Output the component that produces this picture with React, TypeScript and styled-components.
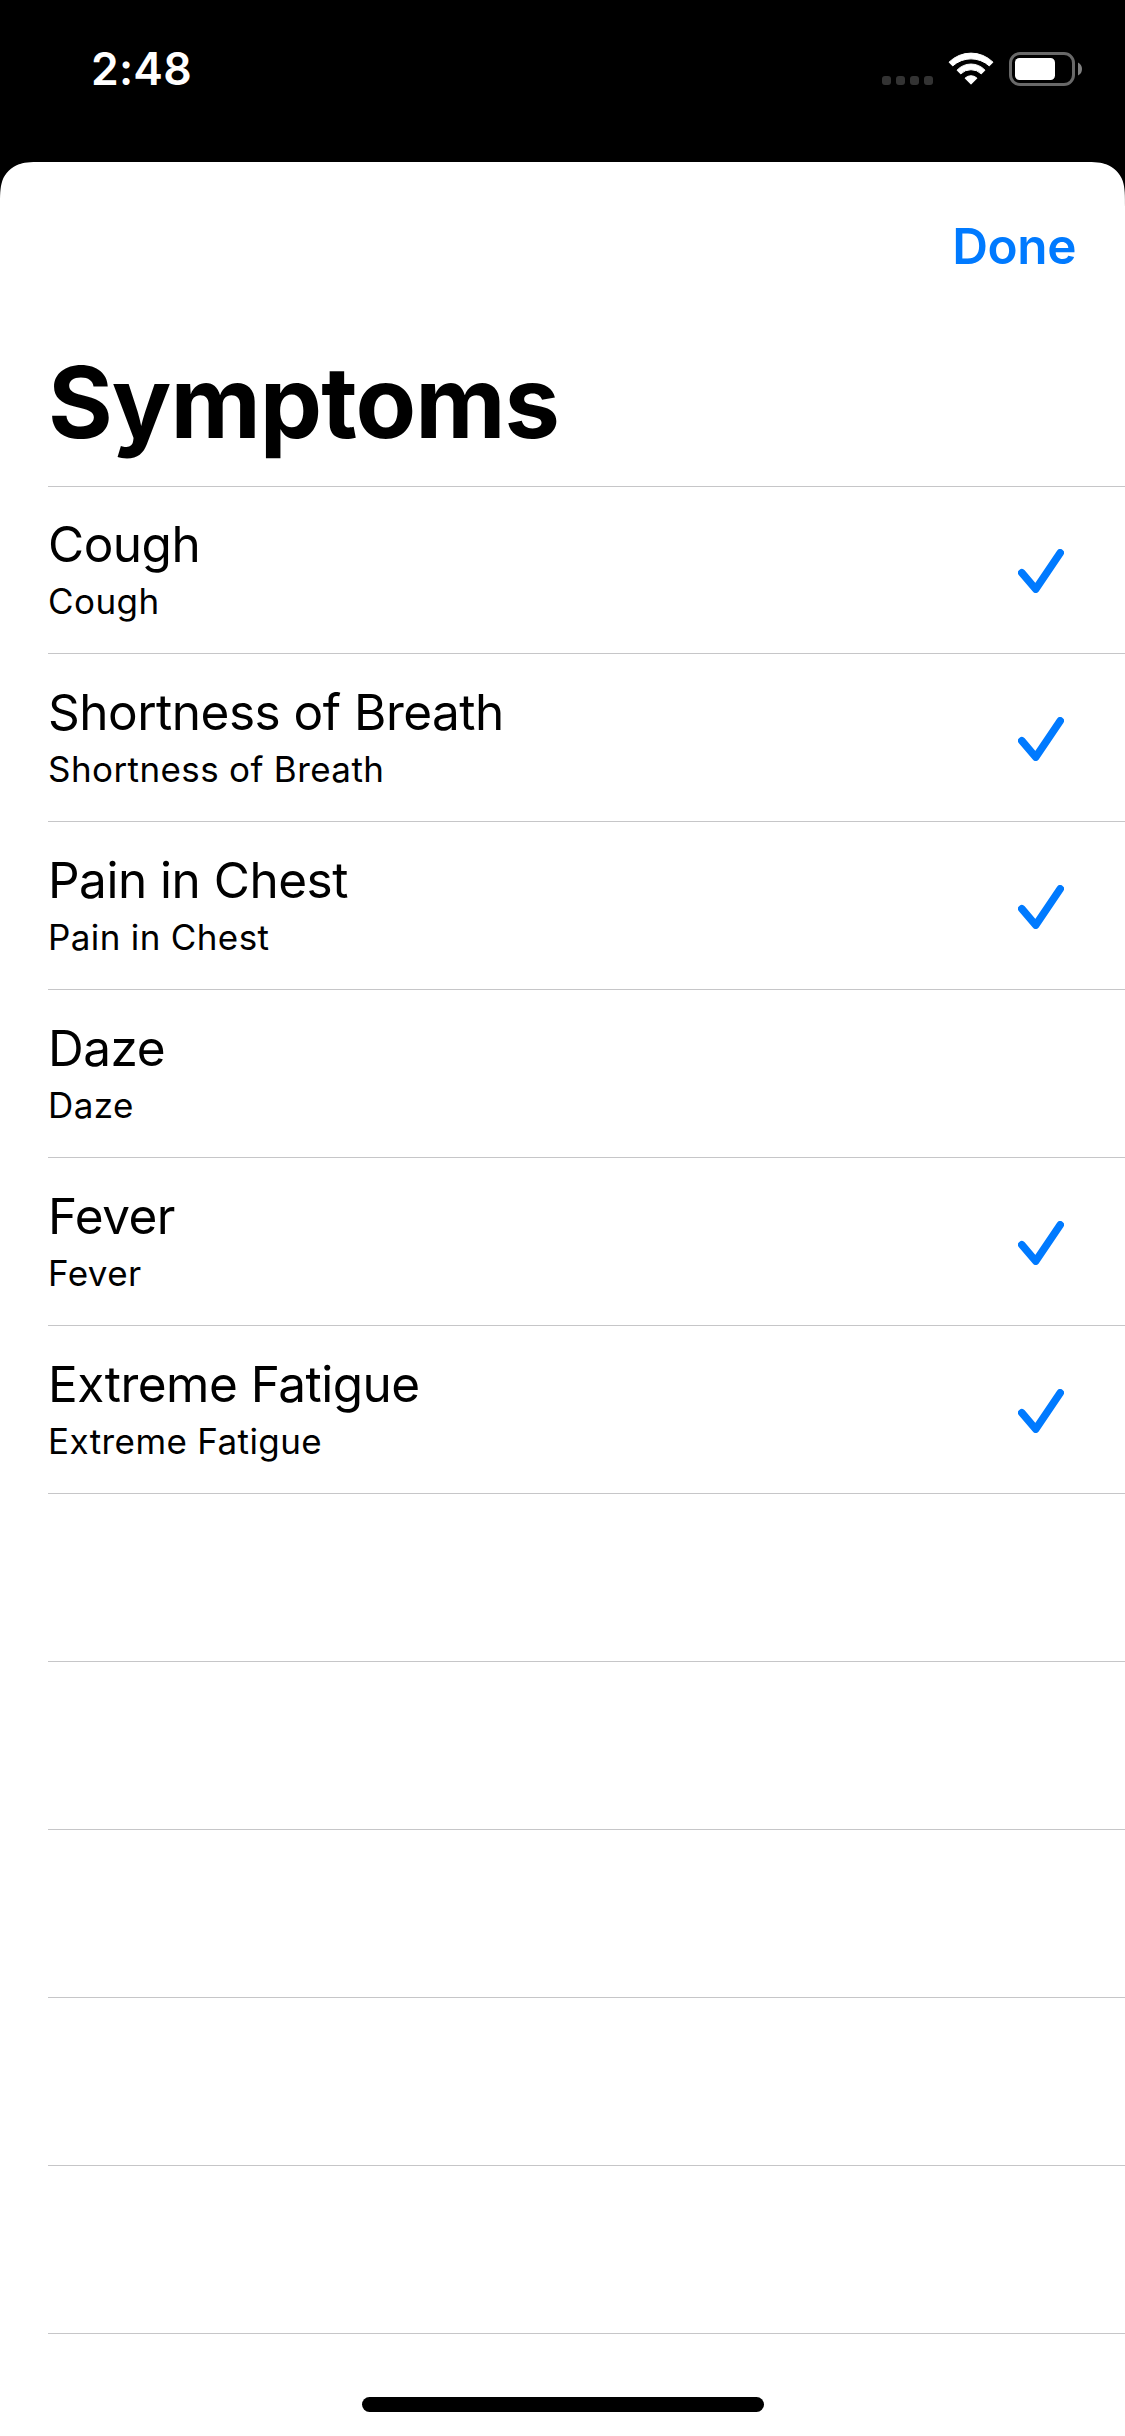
import React from 'react';
import styled, { createGlobalStyle } from 'styled-components';

const GlobalStyle = createGlobalStyle`
  body {
    margin: 0;
    background: #000;
  }
`;

const Screen = styled.div`
  width: 1125px;
  height: 2436px;
  display: flex;
  flex-direction: column;
  overflow: hidden;
  background: #000;
  color: #000;
  font-family: Inter, 'Liberation Sans', sans-serif;
`;

const StatusBar = styled.header`
  flex: none;
  box-sizing: border-box;
  height: 162px;
  padding: 42px 41px 0 91px;
  display: flex;
  justify-content: space-between;
  align-items: flex-start;
`;

const Clock = styled.time`
  color: #fff;
  font-size: 44.5px;
  font-weight: 560;
  line-height: 54px;
  letter-spacing: 0.2px;
`;

const StatusIcons = styled.div`
  display: flex;
  align-items: flex-end;
  margin-top: 10px;
  height: 34px;
`;

const SignalDots = styled.div`
  display: flex;
  gap: 5px;
  margin: 0 15px 1px 0;
`;

const Dot = styled.span`
  width: 9px;
  height: 9px;
  border-radius: 3px;
  background: #333;
`;

const WifiSvg = styled.svg`
  display: block;
  margin-right: 15px;
`;

const Sheet = styled.main`
  flex: 1;
  display: flex;
  flex-direction: column;
  background: #fff;
  clip-path: path('M45.86 0C32.65 0 26.05 0 20.1 1.96L18.94 2.25C11.18 5.07 5.07 11.18 2.25 18.94C0 26.05 0 32.65 0 45.86V2274H1125V45.86C1125 32.65 1125 26.05 1122.75 18.94C1119.93 11.18 1113.82 5.07 1106.06 2.25L1104.9 1.96C1098.95 0 1092.35 0 1079.14 0Z');
`;

const NavBar = styled.div`
  box-sizing: border-box;
  height: 180px;
  padding: 54px 49px 0;
  display: flex;
  justify-content: flex-end;
  align-items: flex-start;
`;

const DoneButton = styled.button`
  border: 0;
  padding: 0;
  background: none;
  color: #007aff;
  font-family: inherit;
  font-size: 49.5px;
  font-weight: 600;
  line-height: 60px;
  letter-spacing: -0.4px;
`;

const Heading = styled.h1`
  box-sizing: border-box;
  margin: 0;
  height: 144px;
  padding-left: 48px;
  font-size: 99px;
  font-weight: 700;
  line-height: 120px;
  letter-spacing: -1px;
`;

const List = styled.ul`
  flex: 1;
  list-style: none;
  margin: 0 0 0 48px;
  padding: 0;
  box-shadow: inset 0 1px #c6c6c8;
`;

const Row = styled.li`
  box-sizing: border-box;
  height: 168px;
  padding: 28px 61px 0 0;
  border-bottom: 1px solid #c6c6c8;
  display: flex;
  justify-content: space-between;
  align-items: flex-start;
`;

const Labels = styled.div`
  display: flex;
  flex-direction: column;
  gap: 6px;
  white-space: nowrap;
`;

const Title = styled.span`
  font-size: 49.5px;
  line-height: 60px;
  letter-spacing: -0.5px;
`;

const Subtitle = styled.span`
  font-size: 35px;
  line-height: 42px;
  letter-spacing: 0.42px;
  word-spacing: -0.3px;
`;

const CheckSvg = styled.svg`
  display: block;
  margin-top: 35px;
`;

const HomeArea = styled.footer`
  flex: none;
  height: 39px;
  display: flex;
  justify-content: center;
`;

const HomeIndicator = styled.div`
  width: 402px;
  height: 15px;
  margin-left: 1px;
  border-radius: 8px;
  background: #000;
`;

const Wifi = () => (
  <WifiSvg width="46" height="34" viewBox="0 0 46 34">
    <g fill="#fff" stroke="#fff" strokeWidth="1" strokeLinejoin="round">
      <path d="M1 10.2A31.2 31.2 0 0 1 45 10.2L41.3 13.9A27.3 27.3 0 0 0 4.7 13.9Z" />
      <path d="M9 18.2A19 19 0 0 1 37 18.2L33.3 21.9A14.7 14.7 0 0 0 12.7 21.9Z" />
      <path d="M17 26.2A8.5 8.5 0 0 1 29 26.2L23 32.2Z" />
    </g>
  </WifiSvg>
);

const Battery = () => (
  <svg width="75" height="34" viewBox="0 0 75 34">
    <rect x="1.5" y="1.5" width="63" height="31" rx="9.5" fill="none" stroke="#696969" strokeWidth="3" />
    <rect x="6" y="6" width="40" height="22" rx="4.5" fill="#fff" />
    <path d="M69 10.5Q73 12.5 73 17T69 23.5Z" fill="#808080" />
  </svg>
);

const Check = () => (
  <CheckSvg width="46" height="44" viewBox="0 0 46 44" role="img" aria-label="Selected">
    <path
      d="M3.8 23.8L17.7 40.1L42.2 3.8"
      fill="none"
      stroke="#007aff"
      strokeWidth="7.6"
      strokeLinecap="round"
      strokeLinejoin="round"
    />
  </CheckSvg>
);

interface Symptom {
  name: string;
  selected: boolean;
}

const symptoms: Symptom[] = [
  { name: 'Cough', selected: true },
  { name: 'Shortness of Breath', selected: true },
  { name: 'Pain in Chest', selected: true },
  { name: 'Daze', selected: false },
  { name: 'Fever', selected: true },
  { name: 'Extreme Fatigue', selected: true },
];

const EMPTY_ROWS = 5;

export default function App() {
  return (
    <>
      <GlobalStyle />
      <Screen>
        <StatusBar>
          <Clock>2:48</Clock>
          <StatusIcons>
            <SignalDots>
              {[0, 1, 2, 3].map((i) => (
                <Dot key={i} />
              ))}
            </SignalDots>
            <Wifi />
            <Battery />
          </StatusIcons>
        </StatusBar>
        <Sheet>
          <NavBar>
            <DoneButton>Done</DoneButton>
          </NavBar>
          <Heading>Symptoms</Heading>
          <List>
            {symptoms.map(({ name, selected }) => (
              <Row key={name}>
                <Labels>
                  <Title>{name}</Title>
                  <Subtitle>{name}</Subtitle>
                </Labels>
                {selected && <Check />}
              </Row>
            ))}
            {Array.from({ length: EMPTY_ROWS }, (_, i) => (
              <Row key={i} />
            ))}
          </List>
          <HomeArea>
            <HomeIndicator />
          </HomeArea>
        </Sheet>
      </Screen>
    </>
  );
}
